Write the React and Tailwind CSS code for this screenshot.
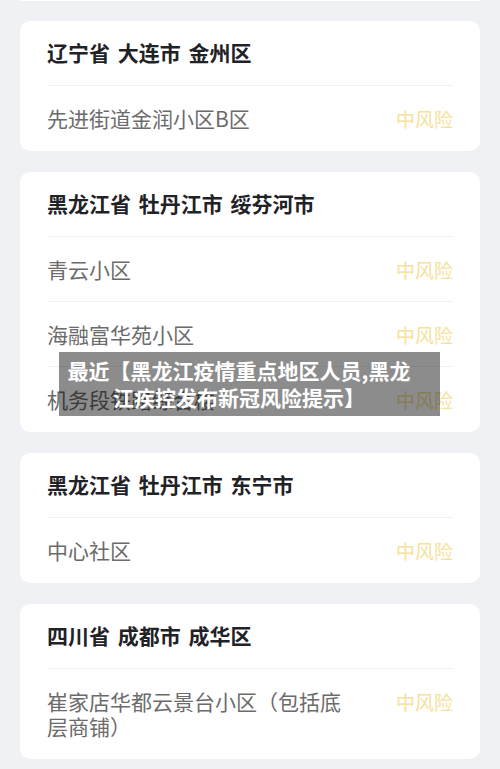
import React from "react";

const cards = [
  {
    title: "辽宁省 大连市 金州区",
    rows: ["先进街道金润小区B区"],
  },
  {
    title: "黑龙江省 牡丹江市 绥芬河市",
    rows: ["青云小区", "海融富华苑小区", "机务段铁路综合楼"],
  },
  {
    title: "黑龙江省 牡丹江市 东宁市",
    rows: ["中心社区"],
  },
  {
    title: "四川省 成都市 成华区",
    rows: ["崔家店华都云景台小区（包括底层商铺）"],
  },
];

function Card({ title, rows }) {
  return (
    <div className="mx-[20px] rounded-[10px] bg-white px-[27px] pb-[1px]">
      <div className="flex h-[64px] items-center text-[21px] font-bold text-[#1f2226] [word-spacing:3px]">
        {title}
      </div>
      {rows.map((r, i) => (
        <div
          key={i}
          className="flex items-start border-t border-[#f0f1f3] pt-[20px] pb-[19px]"
        >
          <div className="w-[305px] text-[21px] leading-[25px] text-[#6b6b6b]">
            {r}
          </div>
          <div className="ml-auto shrink-0 text-[19px] leading-[25px] text-[#f5e29c]">
            中风险
          </div>
        </div>
      ))}
    </div>
  );
}

export default function App() {
  return (
    <div
      className="relative h-[769px] w-[500px] overflow-hidden bg-[#eff1f4]"
      style={{ fontFamily: '"Noto Sans CJK SC", "Noto Sans", sans-serif' }}
    >
      <div className="flex flex-col gap-[21px]">
        <div className="mx-[20px] -mb-[1px] h-[1px] rounded-b-[10px] bg-white" />
        {cards.map((c, i) => (
          <Card key={i} {...c} />
        ))}
      </div>
      <div className="absolute left-[59px] top-[352px] w-[381px] bg-black/45 py-[5px] pl-[6px]">
        <div className="w-[348px] text-center text-[21px] font-bold leading-[27px] text-white">
          最近【黑龙江疫情重点地区人员,黑龙江疾控发布新冠风险提示】
        </div>
      </div>
    </div>
  );
}
